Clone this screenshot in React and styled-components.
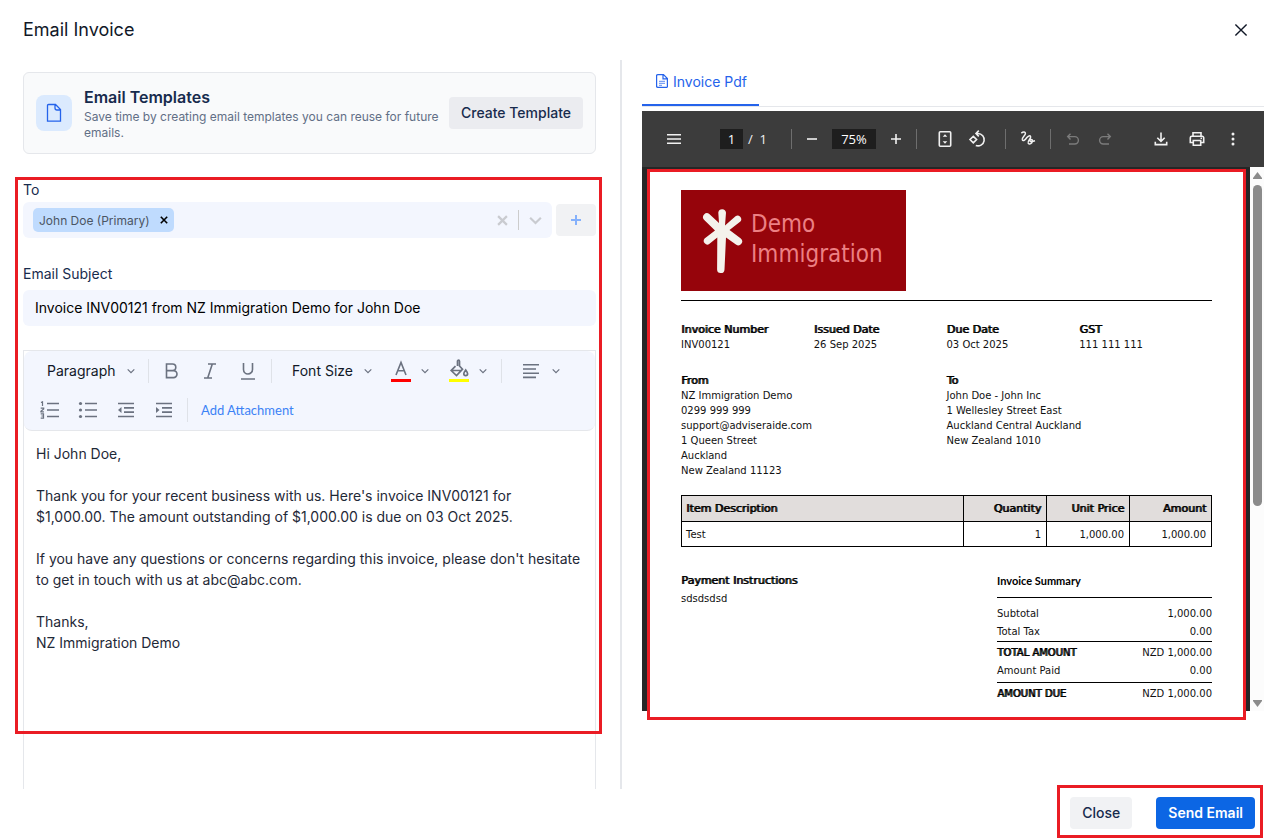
import React from "react";
import styled, { createGlobalStyle, css } from "styled-components";

const GlobalStyle = createGlobalStyle`
  *, *::before, *::after { box-sizing: border-box; }
  body { margin: 0; background: #fff; font-family: Inter, "Liberation Sans", sans-serif; font-size: 14px; color: #1f2937; }
  button, input, select, textarea { font: inherit; color: inherit; }
  h1, h2, h3, p, dl, dd, dt { margin: 0; font-weight: inherit; }
  svg { display: block; flex: none; }
`;

/* ---------- dialog frame ---------- */

const Dialog = styled.div`
  min-height: 100vh;
  display: flex;
  flex-direction: column;
  background: #fff;
`;

const Header = styled.header`
  height: 60px;
  padding: 0 16px 0 23px;
  display: flex;
  align-items: center;
  justify-content: space-between;
`;

const Title = styled.h1`
  font-size: 18px;
  line-height: 24px;
  color: #111827;
`;

const PlainButton = styled.button`
  border: 0;
  padding: 0;
  background: none;
  display: flex;
  align-items: center;
  justify-content: center;
  cursor: pointer;
`;

const CloseIconButton = styled(PlainButton)`
  width: 20px;
  height: 20px;
  color: #111827;
`;

const Body = styled.main`
  flex: 1;
  display: grid;
  grid-template-columns: 622fr 645fr;
`;

const ComposePane = styled.section`
  border-right: 2px solid #e5e7eb;
  padding: 12px 24px 0 23px;
  display: flex;
  flex-direction: column;
  min-width: 0;
`;

const PreviewPane = styled.section`
  padding: 0 3px 0 20px;
  min-width: 0;
`;

const Footer = styled.footer`
  height: 50px;
  padding: 0 12px 2px;
  display: flex;
  align-items: center;
  justify-content: flex-end;
`;

const Marked = styled.div`
  position: relative;
  &::after {
    content: "";
    position: absolute;
    inset: ${(p) => p.$inset};
    border: 3px solid #ea1c24;
    pointer-events: none;
  }
`;

const FooterActions = styled(Marked)`
  display: flex;
  gap: 24px;
`;

const Button = styled.button`
  height: 32px;
  border: 0;
  border-radius: 4px;
  padding: 0 12px 2px;
  font-weight: 500;
  white-space: nowrap;
  cursor: pointer;
  ${(p) =>
    p.$primary
      ? css`background: #0c66e4; color: #fff; font-weight: 600;`
      : css`background: ${p.$tone || "#f1f2f4"}; color: #172b4d;`}
`;

/* ---------- compose pane ---------- */

const TemplateCard = styled.div`
  min-height: 82px;
  border: 1px solid #e5e7eb;
  border-radius: 6px;
  background: #f9fafb;
  padding: 12px;
  display: flex;
  align-items: center;
  gap: 12px;
  margin-bottom: 26px;
`;

const CardIcon = styled.div`
  width: 36px;
  height: 36px;
  border-radius: 8px;
  background: #dbeafe;
  color: #2563eb;
  display: grid;
  place-items: center;
  flex: none;
`;

const CardText = styled.div`
  flex: 1;
  min-width: 0;
  margin-right: -4px;
`;

const CardTitle = styled.h2`
  font-size: 16px;
  line-height: 24px;
  font-weight: 600;
  color: #172b4d;
`;

const CardHint = styled.p`
  font-size: 12px;
  line-height: 16px;
  color: #626f86;
`;

const Form = styled(Marked)`
  flex: 1;
  display: flex;
  flex-direction: column;
`;

const Label = styled.label`
  display: block;
  font-size: 14px;
  line-height: 20px;
  color: #172b4d;
  margin-bottom: ${(p) => p.$gap};
`;

const RecipientRow = styled.div`
  display: flex;
  align-items: center;
  gap: 4px;
  margin-bottom: 26px;
`;

const RecipientBox = styled.div`
  flex: 1;
  min-width: 0;
  height: 36px;
  border-radius: 6px;
  background: #f3f6fe;
  padding: 0 10px;
  display: flex;
  align-items: center;
  color: #c9cbd0;
`;

const Chip = styled.span`
  height: 24px;
  border-radius: 5px;
  background: #bfdbfe;
  color: #4b5563;
  font-size: 12px;
  padding: 0 6px;
  display: flex;
  align-items: center;
  gap: 10px;
  white-space: nowrap;
  button { color: #000; }
`;

const RecipientInput = styled.input`
  flex: 1;
  min-width: 0;
  border: 0;
  outline: 0;
  background: none;
`;

const BoxRule = styled.span`
  width: 1px;
  height: 20px;
  background: #ccc;
  margin: 0 10px;
`;

const AddRecipient = styled(Button)`
  width: 40px;
  padding: 0;
  display: grid;
  place-items: center;
  color: #85b1fb;
`;

const SubjectInput = styled.input`
  width: 100%;
  height: 36px;
  border: 0;
  border-radius: 6px;
  background: #f3f6fe;
  color: #000;
  padding: 0 12px 2px;
  margin-bottom: 24px;
`;

const Editor = styled.div`
  flex: 1;
  border: 1px solid #e5e7eb;
  border-bottom: 0;
  display: flex;
  flex-direction: column;
`;

const Toolbar = styled.div`
  background: #f3f6fe;
  border-bottom: 1px solid #e5e7eb;
  border-radius: 8px;
  padding: 0 7px 1px;
`;

const ToolRow = styled.div`
  display: flex;
  align-items: center;
  height: 39px;
  color: #6b7280;
`;

const Tool = styled(PlainButton)`
  width: 38px;
  height: 32px;
`;

const PickerLabel = styled.label`
  display: flex;
  align-items: center;
  gap: 8px;
  padding: 0 9px 0 16px;
`;

const Picker = styled.select`
  appearance: none;
  border: 0;
  padding: 0;
  background: none;
  color: #111827;
  width: ${(p) => p.$width};
  height: 24px;
`;

const ToolRule = styled.span`
  width: 1px;
  height: 24px;
  background: #dfe2e8;
  margin: ${(p) => p.$margin || 0};
`;

const ColorTool = styled(Tool)`
  width: 58px;
  gap: ${(p) => p.$gap || "10px"};
`;

const Swatch = styled.span`
  border-bottom: 3px solid ${(p) => p.$color};
  width: 20px;
  height: 23px;
  display: flex;
  justify-content: center;
`;

const AttachButton = styled(PlainButton)`
  color: #3b82f6;
  font-family: Lato, sans-serif;
  font-size: 13px;
  height: 32px;
  padding: 0 13px;
`;

const Message = styled.textarea`
  flex: 1;
  min-height: 320px;
  border: 0;
  outline: 0;
  resize: none;
  background: none;
  overflow: hidden;
  padding: 12px;
  font-size: 14px;
  line-height: 21px;
`;

/* ---------- preview pane ---------- */

const Tabs = styled.nav`
  height: 47px;
  border-bottom: 1px solid #e5e7eb;
  display: flex;
  margin-bottom: 4px;
`;

const Tab = styled.button`
  border: 0;
  border-bottom: 2px solid #2563eb;
  background: none;
  color: #2563eb;
  height: 46px;
  padding: 0 12px 2px 14px;
  display: flex;
  align-items: center;
  gap: 5px;
`;

const PdfBar = styled.div`
  height: 56px;
  background: #3c3c3c;
  color: #f1f1f1;
  font-family: "Open Sans", "Noto Sans", sans-serif;
  font-size: 13px;
  padding: 0 15px 0 16px;
  display: flex;
  align-items: center;
`;

const PdfTool = styled(PlainButton)`
  width: 32px;
  height: 32px;
  margin: 0 ${(p) => p.$after || 0} 0 ${(p) => p.$before || 0};
  opacity: ${(p) => (p.disabled ? 0.35 : 1)};
`;

const PdfInput = styled.input`
  width: ${(p) => p.$width};
  height: 20px;
  border: 0;
  padding: 0;
  background: #1e1e1e;
  color: #fff;
  text-align: center;
`;

const PageTotal = styled.span`
  padding: 0 24px 0 5px;
  white-space: pre;
`;

const PdfRule = styled.span`
  width: 1px;
  height: 20px;
  background: #6e6e6e;
  margin: ${(p) => p.$margin || 0};
`;

const Spacer = styled.span`
  flex: 1;
`;

const Viewer = styled.div`
  display: flex;
  background: #262626;
`;

const Sheet = styled(Marked)`
  flex: 1;
  min-width: 0;
  margin: 3px 4px 0 6px;
  background: #fff;
  color: #111;
  padding: 20px 34px 8px 33px;
  font-family: Verdana, "DejaVu Sans", sans-serif;
  font-size: 10px;
  line-height: 15px;
`;

const Scrollbar = styled.div`
  width: 14px;
  background: #fcfcfc;
  padding: 5px 0 4px;
  display: flex;
  flex-direction: column;
  align-items: center;
  color: #8b8b8b;
`;

const Thumb = styled.span`
  width: 9px;
  flex: 0 0 60%;
  margin: 6px 0 auto;
  border-radius: 5px;
  background: #8b8b8b;
`;

const Logo = styled.div`
  width: 225px;
  height: 101px;
  background: #96040b;
  color: #ec8084;
  padding: 0 0 0 21px;
  display: flex;
  align-items: center;
  gap: 8px;
`;

const LogoName = styled.div`
  font-family: "DejaVu Sans Condensed", sans-serif;
  font-size: 24px;
  line-height: 30px;
  padding-bottom: 4px;
`;

const Facts = styled.dl`
  display: grid;
  grid-template-columns: repeat(${(p) => p.$columns}, 1fr);
  margin-top: 21px;
`;

const heavy = css`
  color: #000;
  text-shadow: 1px 0 0 currentColor;
`;

const Term = styled.dt`
  ${heavy}
  font-size: 11px;
`;

const LogoRule = styled.hr`
  border: 0;
  border-top: 1px solid #000;
  margin: 9px 0 0;
`;

const Items = styled.table`
  width: 100%;
  margin-top: 17px;
  border-collapse: collapse;
  table-layout: fixed;
  th, td {
    border: 1px solid #000;
    height: 25px;
    padding: 0 5px 0 4px;
    text-align: right;
    font-weight: 400;
  }
  th { background: #e1dddc; ${heavy} font-size: 11px; height: 26px; }
  th:first-child, td:first-child { text-align: left; }
  th:not(:first-child) { width: 83px; }
  th:last-child { width: 82px; }
`;

const Bottom = styled.div`
  display: flex;
  justify-content: space-between;
  margin-top: 26px;
`;

const Payment = styled.div`
  line-height: 20px;
  h3 { ${heavy} font-size: 11px; line-height: 16px; }
`;

const Summary = styled.div`
  width: 215px;
  h3 {
    font-family: Lato, sans-serif;
    font-weight: 700;
    font-size: 11px;
    line-height: 16px;
    color: #000;
    padding-bottom: 8px;
  }
`;

const SumBlock = styled.dl`
  border-top: 1px solid #000;
  padding: ${(p) => p.$pad};
`;

const SumLine = styled.div`
  display: flex;
  justify-content: space-between;
  line-height: 18px;
  dt { ${(p) => p.$strong && heavy} }
`;

/* ---------- icons ---------- */

const Svg = ({ w = 20, h, box, sw = 2, children, ...rest }) => (
  <svg width={w} height={h || w} viewBox={box || `0 0 ${w} ${h || w}`} fill="none" stroke="currentColor" strokeWidth={sw} aria-hidden="true" {...rest}>
    {children}
  </svg>
);

const Chevron = ({ w = 8, sw = 1.2 }) => (
  <Svg w={w} h={w} box="0 0 8 8" sw={sw}><path d="M.7 2.3 4 5.6l3.3-3.3" /></Svg>
);
const Cross = ({ w, sw }) => (
  <Svg w={w} box="0 0 10 10" sw={sw}><path d="m1 1 8 8M9 1 1 9" /></Svg>
);
const FileIcon = () => (
  <Svg w={16} h={20} sw={1.3}><path d="M3 1.5h6.5l5 5v11.700H1.500V2.500a1 1 0 0 1 1-1ZM9 1.500V5a2 2 0 0 0 2 2h3.500" /></Svg>
);
const TabFileIcon = () => (
  <Svg w={12} h={14} sw={1.2}><path d="M1.800.6h5.700l3.900 3.900v8.300l-.6.6H1.800L.6 12.800V1.200ZM7 .6v4.200h4.400" /><path opacity=".6" d="M3 7.300h6M3 9.300h6M3 11.300h3" /></Svg>
);
const BoldIcon = () => <Svg w={16} h={18} sw={1.6}><path d="M2.500 2h6a3.300 3.300 0 0 1 0 6.600h-6zM2.500 8.600h7a3.500 3.500 0 0 1 0 7h-7z" /></Svg>;
const ItalicIcon = () => <Svg w={16} h={18} sw={1.6}><path d="M6 2h8M2 16h8M10.300 2 5.700 16" /></Svg>;
const UnderlineIcon = () => <Svg w={16} h={18} sw={1.6}><path d="M3.500 1v6.500a4.500 4.500 0 0 0 9 0V1M1 17h14" /></Svg>;
const LetterIcon = () => <Svg w={14} h={18} sw={1.6}><path d="M2 16 7 3.500 12 16M3.700 11.800h6.600" /></Svg>;
const BucketIcon = () => (
  <Svg w={20} h={20} sw={1.7}><path d="M8.500 7V2.200a1 1 0 0 1 2 0V7l3 3.200-6 6.300-5.300-5 4.300-4.300M2.500 11.500h10.500M16.700 11c1.200 1.600 1.900 2.700 1.900 3.800a1.900 1.900 0 0 1-3.800 0c0-1.100.7-2.200 1.900-3.800Z" /></Svg>
);
const AlignIcon = () => <Svg w={18} h={16} sw={1.6}><path d="M1 1.800h16M1 6h13M1 10.200h16M1 14.400h13" /></Svg>;
const NumberedIcon = () => (
  <Svg w={20} h={18} sw={1.7}>
    <path d="M7 2.500h12M7 9h12M7 15.500h12" />
    <path strokeWidth="1.200" d="M1 1.500 2.500.8V5M.7 7.200h3v.8L.9 10.400v.4h3M.7 12.900h2.800v4.300H.7M1.400 15h2" />
  </Svg>
);
const BulletIcon = () => (
  <Svg w={20} h={18} sw={1.700}>
    <path d="M7 2.500h12M7 9h12M7 15.500h12" />
    <g fill="currentColor" stroke="none"><circle cx="2.500" cy="2.500" r="1.600" /><circle cx="2.500" cy="9" r="1.600" /><circle cx="2.500" cy="15.500" r="1.600" /></g>
  </Svg>
);
const IndentIcon = ({ out }) => (
  <Svg w={18} h={16} sw={1.700}>
    <path d="M1 1.500h16M7 5.800h10M7 10.200h10M1 14.500h16" />
    <path fill="currentColor" stroke="none" d={out ? "M4.500 5v6L1 8z" : "M1 5v6l3.500-3z"} />
  </Svg>
);
const FitIcon = () => (
  <Svg w={14} h={18} sw={1.600}>
    <rect x="1.300" y="1.800" width="11.400" height="14.400" rx="1" />
    <path fill="currentColor" stroke="none" d="m7 4.300 2.300 2.400H4.700zM7 13.700l2.300-2.400H4.700z" />
  </Svg>
);
const RotateIcon = () => (
  <Svg w={18} h={18} sw={1.600}>
    <path d="M5.300 6.300 8.600 9.600l-3.300 3.300L2 9.600zM8 3.500h2a6.200 6.200 0 1 1-2.200 12M10.800.6 8 3.500l2.800 2.900" />
  </Svg>
);
const DrawIcon = () => (
  <Svg w={16} h={16} sw={1.500}>
    <path d="M1.300 2.200C3.300.6 5.600.7 5.400 2.800 5.200 4.700 1.600 6.600 2.300 8.700c.9 2.300 3.400-.6 4.600-2.200 1.300-1.700 3.100-2.200 3.700-1 .9 1.900-3.500 4.200-2.400 6.600 1 2 4.300.3 4.300-2.400 0-1.700-2.600-1.600-2.600-.2 0 1.500 2.600 1.100 5.100.3" />
  </Svg>
);
const UndoIcon = (props) => (
  <Svg w={14} h={14} sw={1.400} {...props}><path d="M4.500 1.800 1.700 4.600l2.800 2.800M2 4.600h6.700a3.500 3.500 0 0 1 0 7.400H3" /></Svg>
);
const DownloadIcon = () => <Svg w={14} h={14} sw={1.600}><path d="M7 .5v8.700M3.300 5.700 7 9.300l3.700-3.600M1.300 9.800v2.800h11.400V9.800" /></Svg>;
const PrintIcon = () => (
  <Svg w={16} h={16} sw={1.600}><path d="M4 5V1.800h8V5M4 11.500H1.300V6.800A1.500 1.500 0 0 1 2.800 5.300h10.400a1.500 1.500 0 0 1 1.500 1.500v4.700H12M4.300 9.500h7.400v4.700H4.300zM11.500 7.300h1.500" /></Svg>
);
const MoreIcon = () => (
  <Svg w={4} h={14} fill="currentColor" stroke="none"><circle cx="2" cy="2" r="1.500" /><circle cx="2" cy="7" r="1.500" /><circle cx="2" cy="12" r="1.500" /></Svg>
);
const LogoMark = () => (
  <svg width="41" height="66" viewBox="0 0 41 66" aria-hidden="true">
    <path
      fill="#f4f2ec"
      d="M16.300 4.500a3.900 3.900 0 0 1 7.700.2L23 17.500 33.500 8.200a3.700 3.700 0 0 1 4.900 5.400L27.500 22l11 8.300a3.900 3.900 0 0 1-4.600 6.300L24 29.500 22.500 61.500a3.700 3.700 0 0 1-7.400-.2L15.300 29.500 7.500 35.800a3.600 3.600 0 0 1-4.900-5.200L13 22.500 2 11.800a4 4 0 0 1 5.300-5.900L17 15z"
    />
  </svg>
);

/* ---------- content ---------- */

const message = `Hi John Doe,

Thank you for your recent business with us. Here's invoice INV00121 for $1,000.00. The amount outstanding of $1,000.00 is due on 03 Oct 2025.

If you have any questions or concerns regarding this invoice, please don't hesitate to get in touch with us at abc@abc.com.

Thanks,
NZ Immigration Demo`;

const invoiceFacts = [
  ["Invoice Number", ["INV00121"]],
  ["Issued Date", ["26 Sep 2025"]],
  ["Due Date", ["03 Oct 2025"]],
  ["GST", ["111 111 111"]],
];

const parties = [
  ["From", ["NZ Immigration Demo", "0299 999 999", "support@adviseraide.com", "1 Queen Street", "Auckland", "New Zealand 11123"]],
  ["To", ["John Doe - John Inc", "1 Wellesley Street East", "Auckland Central Auckland", "New Zealand 1010"]],
];

function FactList({ facts }) {
  return (
    <Facts $columns={facts.length}>
      {facts.map(([term, lines]) => (
        <div key={term}>
          <Term>{term}</Term>
          {lines.map((line) => <dd key={line}>{line}</dd>)}
        </div>
      ))}
    </Facts>
  );
}

function SumRow({ label, value, strong }) {
  return (
    <SumLine $strong={strong}>
      <dt>{label}</dt>
      <dd>{value}</dd>
    </SumLine>
  );
}

function Compose() {
  return (
    <ComposePane>
      <TemplateCard>
        <CardIcon><FileIcon /></CardIcon>
        <CardText>
          <CardTitle>Email Templates</CardTitle>
          <CardHint>Save time by creating email templates you can reuse for future emails.</CardHint>
        </CardText>
        <Button type="button" $tone="#ebecf0">Create Template</Button>
      </TemplateCard>

      <Form $inset="-3px -6px 55px -8px">
        <Label htmlFor="to" $gap="2px">To</Label>
        <RecipientRow>
          <RecipientBox>
            <Chip>
              John Doe (Primary)
              <PlainButton type="button" aria-label="Remove John Doe"><Cross w={8} sw={2} /></PlainButton>
            </Chip>
            <RecipientInput id="to" />
            <PlainButton type="button" aria-label="Clear recipients"><Cross w={11} sw={2} /></PlainButton>
            <BoxRule />
            <PlainButton type="button" aria-label="Show recipients"><Chevron w={13} sw={1.300} /></PlainButton>
          </RecipientBox>
          <AddRecipient type="button" aria-label="Add recipient">
            <Svg w={10} sw={2}><path d="M5 0v10M0 5h10" /></Svg>
          </AddRecipient>
        </RecipientRow>

        <Label htmlFor="subject" $gap="6px">Email Subject</Label>
        <SubjectInput id="subject" defaultValue="Invoice INV00121 from NZ Immigration Demo for John Doe" />

        <Editor>
          <Toolbar>
            <ToolRow>
              <PickerLabel>
                <Picker aria-label="Block style" $width="72px"><option>Paragraph</option></Picker>
                <Chevron />
              </PickerLabel>
              <ToolRule $margin="0 4px" />
              <Tool type="button" aria-label="Bold"><BoldIcon /></Tool>
              <Tool type="button" aria-label="Italic"><ItalicIcon /></Tool>
              <Tool type="button" aria-label="Underline"><UnderlineIcon /></Tool>
              <ToolRule $margin="0 4px" />
              <PickerLabel>
                <Picker aria-label="Font size" $width="64px"><option>Font Size</option></Picker>
                <Chevron />
              </PickerLabel>
              <ColorTool type="button" aria-label="Text color">
                <Swatch $color="#ff0000"><LetterIcon /></Swatch>
                <Chevron />
              </ColorTool>
              <ColorTool type="button" aria-label="Background color">
                <Swatch $color="#ffff00"><BucketIcon /></Swatch>
                <Chevron />
              </ColorTool>
              <ToolRule $margin="0 10px 0 4px" />
              <ColorTool type="button" aria-label="Alignment" $gap="12px">
                <AlignIcon />
                <Chevron />
              </ColorTool>
            </ToolRow>
            <ToolRow>
              <Tool type="button" aria-label="Numbered list"><NumberedIcon /></Tool>
              <Tool type="button" aria-label="Bulleted list"><BulletIcon /></Tool>
              <Tool type="button" aria-label="Decrease indent"><IndentIcon out /></Tool>
              <Tool type="button" aria-label="Increase indent"><IndentIcon /></Tool>
              <ToolRule $margin="0 0 0 4px" />
              <AttachButton type="button">Add Attachment</AttachButton>
            </ToolRow>
          </Toolbar>
          <Message aria-label="Email message" defaultValue={message} />
        </Editor>
      </Form>
    </ComposePane>
  );
}

function Invoice() {
  return (
    <Sheet as="article" $inset="-1px 0 -9px -1px">
      <Logo>
        <LogoMark />
        <LogoName>Demo<br />Immigration</LogoName>
      </Logo>
      <LogoRule />
      <FactList facts={invoiceFacts} />
      <FactList facts={parties} />
      <Items>
        <thead>
          <tr><th>Item Description</th><th>Quantity</th><th>Unit Price</th><th>Amount</th></tr>
        </thead>
        <tbody>
          <tr><td>Test</td><td>1</td><td>1,000.00</td><td>1,000.00</td></tr>
        </tbody>
      </Items>
      <Bottom>
        <Payment>
          <h3>Payment Instructions</h3>
          <p>sdsdsdsd</p>
        </Payment>
        <Summary>
          <h3>Invoice Summary</h3>
          <SumBlock $pad="7px 0 0">
            <SumRow label="Subtotal" value="1,000.00" />
            <SumRow label="Total Tax" value="0.00" />
          </SumBlock>
          <SumBlock $pad="2px 0">
            <SumRow label="TOTAL AMOUNT" value="NZD 1,000.00" strong />
            <SumRow label="Amount Paid" value="0.00" />
          </SumBlock>
          <SumBlock $pad="2px 0 0">
            <SumRow label="AMOUNT DUE" value="NZD 1,000.00" strong />
          </SumBlock>
        </Summary>
      </Bottom>
    </Sheet>
  );
}

function Preview() {
  return (
    <PreviewPane>
      <Tabs>
        <Tab type="button"><TabFileIcon />Invoice Pdf</Tab>
      </Tabs>
      <PdfBar>
        <PdfTool type="button" aria-label="Menu" $after="30px"><Svg w={14} sw={1.5}><path d="M0 2.700h14M0 7h14M0 11.300h14" /></Svg></PdfTool>
        <PdfInput aria-label="Page number" defaultValue="1" $width="23px" />
        <PageTotal>/  1</PageTotal>
        <PdfRule $margin="0 4px 0 0" />
        <PdfTool type="button" aria-label="Zoom out" $after="4px"><Svg w={12} sw={1.6}><path d="M1 6h10" /></Svg></PdfTool>
        <PdfInput aria-label="Zoom level" defaultValue="75%" $width="44px" />
        <PdfTool type="button" aria-label="Zoom in" $before="4px" $after="4px"><Svg w={12} sw={1.6}><path d="M6 1v10M1 6h10" /></Svg></PdfTool>
        <PdfRule $margin="0 12px 0 0" />
        <PdfTool type="button" aria-label="Fit to page"><FitIcon /></PdfTool>
        <PdfTool type="button" aria-label="Rotate"><RotateIcon /></PdfTool>
        <PdfRule $margin="0 6px 0 12px" />
        <PdfTool type="button" aria-label="Draw"><DrawIcon /></PdfTool>
        <PdfRule $margin="0 6px" />
        <PdfTool type="button" aria-label="Undo" disabled><UndoIcon /></PdfTool>
        <PdfTool type="button" aria-label="Redo" disabled><UndoIcon transform="scale(-1 1)" /></PdfTool>
        <Spacer />
        <PdfTool type="button" aria-label="Download" $after="4px"><DownloadIcon /></PdfTool>
        <PdfTool type="button" aria-label="Print" $after="4px"><PrintIcon /></PdfTool>
        <PdfTool type="button" aria-label="More"><MoreIcon /></PdfTool>
      </PdfBar>
      <Viewer>
        <Invoice />
        <Scrollbar>
          <Svg w={9} h={7} fill="currentColor" stroke="none"><path d="M4.500 0 9 6v1H0V6z" /></Svg>
          <Thumb />
          <Svg w={9} h={7} fill="currentColor" stroke="none"><path d="M4.500 7 9 1V0H0v1z" /></Svg>
        </Scrollbar>
      </Viewer>
    </PreviewPane>
  );
}

export default function App() {
  return (
    <>
      <GlobalStyle />
      <Dialog>
        <Header>
          <Title>Email Invoice</Title>
          <CloseIconButton type="button" aria-label="Close dialog"><Cross w={14} sw={1} /></CloseIconButton>
        </Header>
        <Body>
          <Compose />
          <Preview />
        </Body>
        <Footer>
          <FooterActions $inset="-12px -8px -9px -13px">
            <Button type="button">Close</Button>
            <Button type="button" $primary>Send Email</Button>
          </FooterActions>
        </Footer>
      </Dialog>
    </>
  );
}
